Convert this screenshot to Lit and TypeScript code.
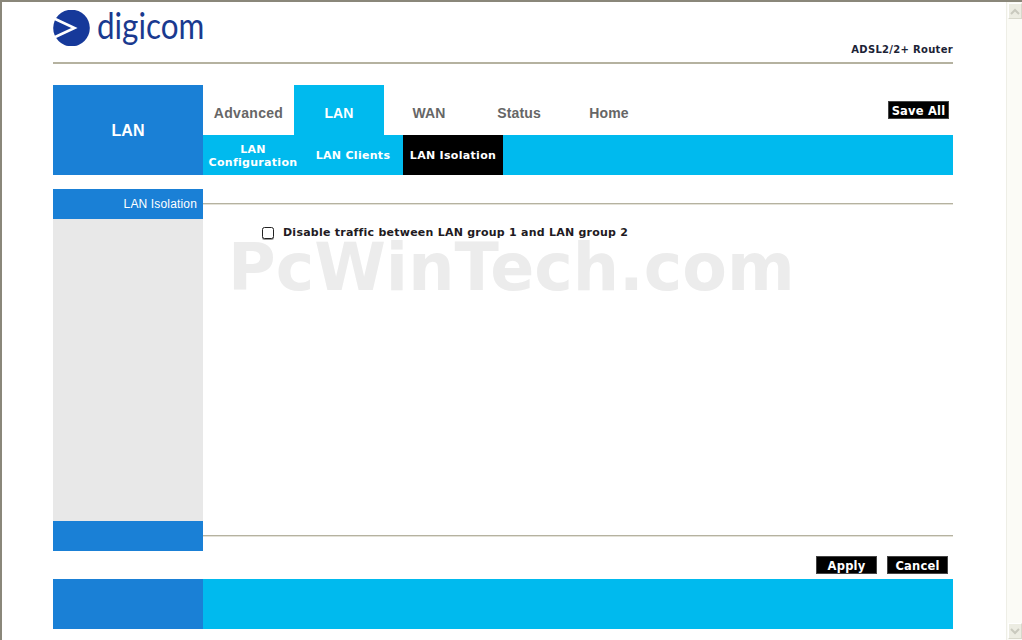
import { LitElement, html, css } from "lit";
import { customElement } from "lit/decorators.js";

@customElement("app-root")
export class AppRoot extends LitElement {
  static styles = css`
    :host { display: block; width: 1022px; height: 640px; overflow: hidden; background: #fff; font-family: "DejaVu Sans", Verdana, sans-serif; }
    .frame { box-sizing: border-box; width: 1022px; height: 640px; display: flex; border-top: 2px solid #8a877a; border-left: 2px solid #8a877a; }
    .page { width: 1004px; padding-left: 51px; box-sizing: border-box; }
    .wrap { width: 900px; }
    .header { height: 60px; border-bottom: 2px solid #b5b2a0; display: flex; justify-content: space-between; box-sizing: content-box; }
    .logo { display: flex; align-items: flex-start; gap: 7px; padding-top: 8px; height: 40px; }
    .logo svg { display: block; flex: none; }
    .logo span { font: 400 36px/36px Lato, sans-serif; color: #1a3a8f; margin-top: -3px; display: block; transform: scaleX(0.872); transform-origin: left center; }
    .model { align-self: flex-end; font: 700 10px/12px "DejaVu Sans", sans-serif; color: #1c2336; margin-bottom: 6px; letter-spacing: 0.3px; }

    .nav { margin-top: 21px; height: 90px; display: flex; }
    .brand { width: 150px; background: #1a80d6; color: #fff; font: 700 16px/91px "Liberation Sans", Arial, sans-serif; text-align: center; }
    .navright { flex: 1; display: flex; flex-direction: column; }
    .tabs { height: 50px; display: flex; align-items: stretch; }
    .tab { width: 90px; text-align: center; font: 700 14px/56px "Liberation Sans", Arial, sans-serif; color: #666; letter-spacing: 0.15px; }
    .tab.first { width: 91px; letter-spacing: 0.3px; }
    .tab.on { background: #00baee; color: #fff; }
    .subs { height: 40px; background: #00baee; display: flex; }
    .sub { color: #fff; font: 700 11px/13px "DejaVu Sans", sans-serif; letter-spacing: 0.3px; display: flex; align-items: center; justify-content: center; text-align: center; width: 100px; }
    .sub.a { padding-top: 1px; box-sizing: border-box; }
    .sub.c { background: #000; }

    .body { margin-top: 14px; height: 362px; display: flex; }
    .side { width: 150px; display: flex; flex-direction: column; background: #e8e8e8; }
    .side .top { height: 30px; background: #1a80d6; color: #fff; font: 400 12px/30px "Liberation Sans", Arial, sans-serif; letter-spacing: 0.16px; text-align: right; padding-right: 6px; box-sizing: border-box; }
    .side .bot { margin-top: auto; height: 30px; background: #1a80d6; }
    .content { flex: 1; position: relative; display: flex; flex-direction: column; }
    .rule { height: 1px; background: #b5b2a0; box-shadow: 0 1px 0 #e4e2d8; }
    .rule.t { margin-top: 14px; }
    .rule.b { margin-top: auto; margin-bottom: 15px; }
    .row { display: flex; align-items: center; margin: 20px 0 0 59px; height: 16px; }
    .check { width: 10px; height: 10px; border: 1px solid #222; border-radius: 2.5px; box-shadow: 0 1px 0 #999; background: #fff; margin-right: 9px; margin-top: 2px; flex: none; }
    .row label { font: 700 11px/16px "DejaVu Sans", sans-serif; color: #221a22; letter-spacing: 0.24px; padding-top: 2px; }
    .mark { position: absolute; left: 25px; top: 54px; font: 700 65px/50px "DejaVu Sans", sans-serif; color: #ececec; white-space: nowrap; pointer-events: none; }

    .actions { height: 28px; display: flex; justify-content: flex-end; align-items: flex-start; gap: 10px; padding: 5px 5px 0 0; box-sizing: border-box; }
    .btn { box-sizing: border-box; background: #000; border: 1px solid #444; color: #fff; font: 700 11.5px/18px "DejaVu Sans", sans-serif; letter-spacing: 0.2px; height: 18px; width: 61px; text-align: center; padding: 0; display: block; }
    .btn.save { margin-top: 16px; margin-right: 4px; margin-left: auto; }

    .footer { height: 50px; display: flex; background: #00baee; }
    .footer div { width: 150px; background: #1a80d6; }

    .scroll { width: 16px; background: #fbfbf6; border-left: 1px solid #eeeee6; box-sizing: border-box; display: flex; flex-direction: column; justify-content: space-between; height: 638px; }
    .sb { width: 14px; height: 16px; margin: 1px 0 0 1px; background: #ecece2; border: 1px solid #fff; border-bottom-color: #d8d8cc; border-right-color: #d8d8cc; box-sizing: border-box; display: flex; align-items: center; justify-content: center; }
    .sb.down { margin: 0 0 1px 1px; }
  `;

  render() {
    return html`
      <div class="frame">
        <div class="page">
          <div class="wrap">
            <div class="header">
              <div class="logo">
                <svg width="37" height="36" viewBox="0 0 37 36">
                  <circle cx="18.5" cy="18" r="18.3" fill="#16399a"></circle>
                  <path d="M0 8 L21.5 18 L0 28" fill="none" stroke="#fff" stroke-width="2.6"></path>
                </svg>
                <span>digicom</span>
              </div>
              <div class="model">ADSL2/2+ Router</div>
            </div>
            <div class="nav">
              <div class="brand">LAN</div>
              <div class="navright">
                <div class="tabs">
                  <div class="tab first">Advanced</div>
                  <div class="tab on">LAN</div>
                  <div class="tab">WAN</div>
                  <div class="tab">Status</div>
                  <div class="tab">Home</div>
                  <button class="btn save">Save All</button>
                </div>
                <div class="subs">
                  <div class="sub a">LAN<br />Configuration</div>
                  <div class="sub b">LAN Clients</div>
                  <div class="sub c">LAN Isolation</div>
                </div>
              </div>
            </div>
            <div class="body">
              <div class="side">
                <div class="top">LAN Isolation</div>
                <div class="bot"></div>
              </div>
              <div class="content">
                <div class="rule t"></div>
                <div class="row">
                  <span class="check"></span>
                  <label>Disable traffic between LAN group 1 and LAN group 2</label>
                </div>
                <div class="mark">PcWinTech.com</div>
                <div class="rule b"></div>
              </div>
            </div>
            <div class="actions">
              <button class="btn">Apply</button>
              <button class="btn">Cancel</button>
            </div>
            <div class="footer"><div></div></div>
          </div>
        </div>
        <div class="scroll">
          <div class="sb">
            <svg width="10" height="7" viewBox="0 0 10 7"><path d="M1 6 L5 2 L9 6" fill="none" stroke="#c9c9be" stroke-width="2"></path></svg>
          </div>
          <div class="sb down">
            <svg width="10" height="7" viewBox="0 0 10 7"><path d="M1 1 L5 5 L9 1" fill="none" stroke="#c9c9be" stroke-width="2"></path></svg>
          </div>
        </div>
      </div>
    `;
  }
}
